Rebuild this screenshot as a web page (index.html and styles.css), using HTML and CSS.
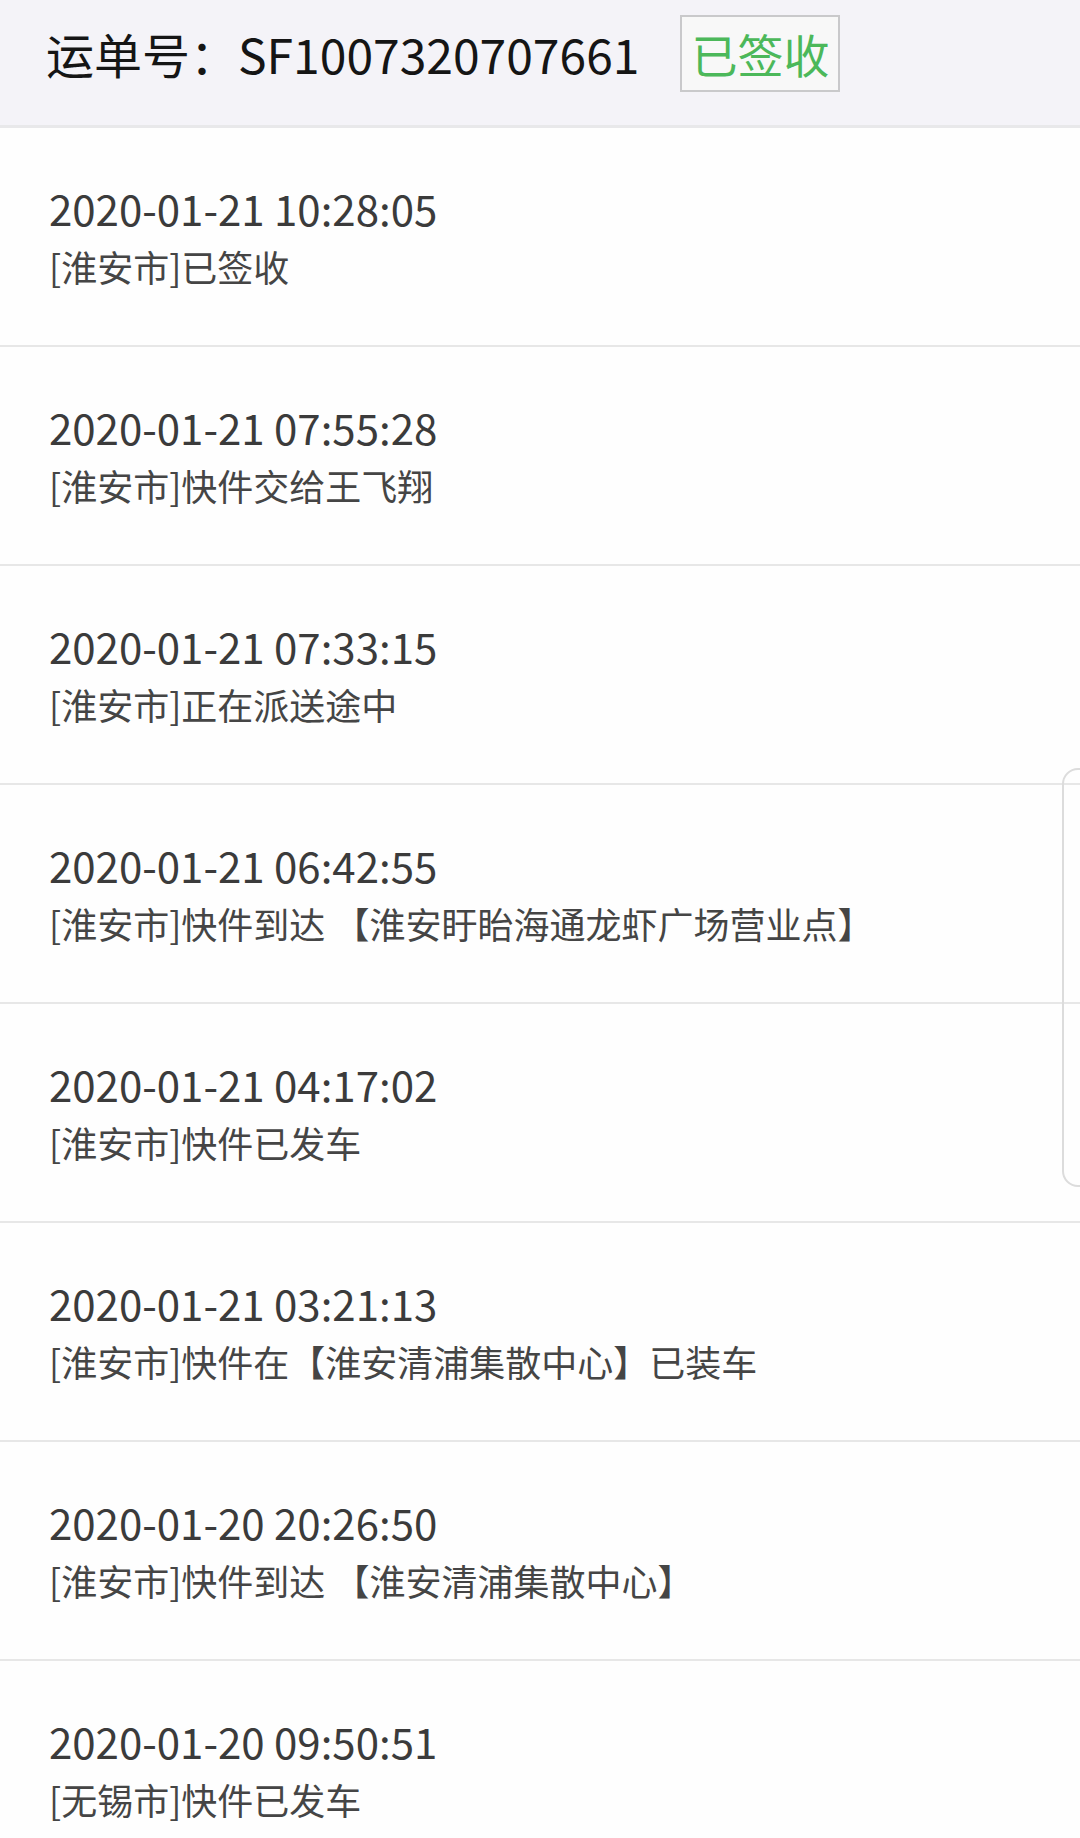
FILE: index.html
```html
<!DOCTYPE html>
<html>
<head>
<meta charset="utf-8"/>
<title>物流详情</title>
<link rel="stylesheet" href="styles.css">
</head>
<body>
<div class="header">
  <span class="waybill">运单号：SF1007320707661</span>
  <span class="status">已签收</span>
</div>
<div class="list">
  <div class="item"><div class="time">2020-01-21 10:28:05</div><div class="desc">[淮安市]已签收</div></div>
  <div class="item"><div class="time">2020-01-21 07:55:28</div><div class="desc">[淮安市]快件交给王飞翔</div></div>
  <div class="item"><div class="time">2020-01-21 07:33:15</div><div class="desc">[淮安市]正在派送途中</div></div>
  <div class="item"><div class="time">2020-01-21 06:42:55</div><div class="desc">[淮安市]快件到达 【淮安盱眙海通龙虾广场营业点】</div></div>
  <div class="item"><div class="time">2020-01-21 04:17:02</div><div class="desc">[淮安市]快件已发车</div></div>
  <div class="item"><div class="time">2020-01-21 03:21:13</div><div class="desc">[淮安市]快件在【淮安清浦集散中心】已装车</div></div>
  <div class="item"><div class="time">2020-01-20 20:26:50</div><div class="desc">[淮安市]快件到达 【淮安清浦集散中心】</div></div>
  <div class="item"><div class="time">2020-01-20 09:50:51</div><div class="desc">[无锡市]快件已发车</div></div>
</div>
<div class="scroll-tab"></div>
</body>
</html>
```

FILE: styles.css
```css
html, body { margin: 0; }
body {
  font-family: "Noto Sans CJK SC", "Noto Sans", sans-serif;
  background: #fefefe;
  overflow: hidden;
}
.header {
  height: 128px; box-sizing: border-box;
  padding: 15px 0 0 46px;
  display: flex; align-items: flex-start;
  background: #f4f3f8;
  border-bottom: 3px solid #e8e8ea;
}
.waybill {
  font-size: 48px; line-height: 77px; color: #151515;
}
.status {
  margin-left: 41px;
  height: 77px; box-sizing: border-box;
  padding: 0 9px;
  border: 2px solid #c9c9cb;
  background: #f8f8f8;
  color: #4cb85a;
  font-size: 46px; line-height: 73px;
}
.item {
  padding: 52px 0 54px 49px;
  border-bottom: 2px solid #e7e7e7;
}
.time {
  font-size: 42px; line-height: 56px; color: #3b3b3b;
}
.desc {
  margin-top: 5px;
  font-size: 36px; line-height: 50px; color: #454545;
}
.scroll-tab {
  position: absolute; left: 1062px; top: 768px;
  width: 40px; height: 415px;
  border: 2px solid #dcdcdc; border-radius: 16px;
}
```
